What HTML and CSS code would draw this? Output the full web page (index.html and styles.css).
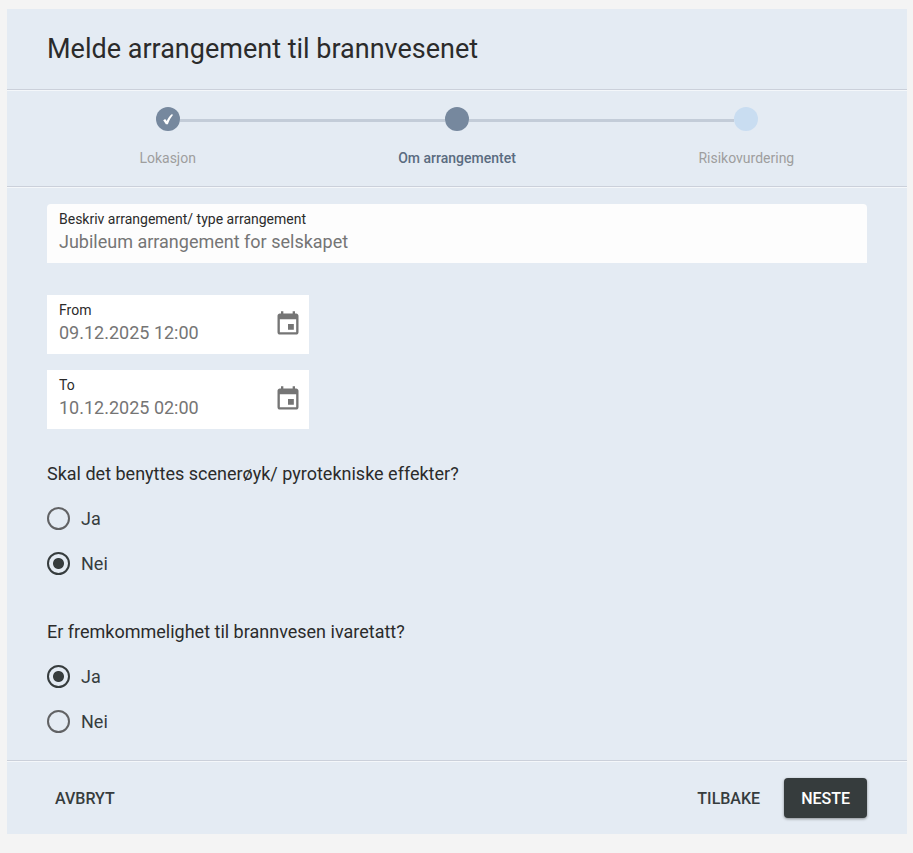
FILE: index.html
```html
<!DOCTYPE html>
<html lang="no">
<head>
    <meta charset="UTF-8">
    <meta name="viewport" content="width=device-width, initial-scale=1.0">
    <title>Melde arrangement til brannvesenet</title>
    <link rel="stylesheet" href="styles.css">
</head>
<body>
    <form class="card">
        <header class="card-header">
            <h1>Melde arrangement til brannvesenet</h1>
        </header>

        <ol class="stepper">
            <li class="step done">
                <div class="track">
                    <span class="dot">
                        <svg width="24" height="24" viewBox="0 0 24 24" aria-hidden="true">
                            <path d="M7.200 13.300l2-1.200 1.500 2c1.100-2.600 2.600-4.900 4.900-6.800l1.500.5c-2.300 2.800-3.900 5.700-5.200 9.400h-2z" fill="#fff"/>
                        </svg>
                    </span>
                </div>
                <span class="step-label">Lokasjon</span>
            </li>
            <li class="step active" aria-current="step">
                <div class="track"><span class="dot"></span></div>
                <span class="step-label">Om arrangementet</span>
            </li>
            <li class="step">
                <div class="track"><span class="dot"></span></div>
                <span class="step-label">Risikovurdering</span>
            </li>
        </ol>

        <main class="content">
            <div class="field field-wide">
                <div class="field-text">
                    <label for="description">Beskriv arrangement/ type arrangement</label>
                    <input type="text" id="description" value="Jubileum arrangement for selskapet">
                </div>
            </div>

            <div class="dates">
                <div class="field">
                    <div class="field-text">
                        <label for="from">From</label>
                        <input type="text" id="from" value="09.12.2025 12:00">
                    </div>
                    <button type="button" class="icon-button" aria-label="From">
                        <svg width="28" height="28" viewBox="0 0 24 24" aria-hidden="true">
                            <path d="M17 12h-5v5h5v-5zM16 1v2H8V1H6v2H5c-1.110 0-1.990.9-1.990 2L3 19c0 1.100.89 2 2 2h14c1.100 0 2-.9 2-2V5c0-1.100-.9-2-2-2h-1V1h-2zm3 18H5V8h14v11z" fill="currentColor"/>
                        </svg>
                    </button>
                </div>
                <div class="field">
                    <div class="field-text">
                        <label for="to">To</label>
                        <input type="text" id="to" value="10.12.2025 02:00">
                    </div>
                    <button type="button" class="icon-button" aria-label="To">
                        <svg width="28" height="28" viewBox="0 0 24 24" aria-hidden="true">
                            <path d="M17 12h-5v5h5v-5zM16 1v2H8V1H6v2H5c-1.110 0-1.990.9-1.990 2L3 19c0 1.100.89 2 2 2h14c1.100 0 2-.9 2-2V5c0-1.100-.9-2-2-2h-1V1h-2zm3 18H5V8h14v11z" fill="currentColor"/>
                        </svg>
                    </button>
                </div>
            </div>

            <fieldset class="question">
                <legend>Skal det benyttes scenerøyk/ pyrotekniske effekter?</legend>
                <label class="option"><input type="radio" name="pyro" value="ja">Ja</label>
                <label class="option"><input type="radio" name="pyro" value="nei" checked>Nei</label>
            </fieldset>

            <fieldset class="question">
                <legend>Er fremkommelighet til brannvesen ivaretatt?</legend>
                <label class="option"><input type="radio" name="access" value="ja" checked>Ja</label>
                <label class="option"><input type="radio" name="access" value="nei">Nei</label>
            </fieldset>
        </main>

        <footer class="actions">
            <button type="button" class="btn">AVBRYT</button>
            <div class="actions-right">
                <button type="button" class="btn">TILBAKE</button>
                <button type="submit" class="btn btn-primary">NESTE</button>
            </div>
        </footer>
    </form>
</body>
</html>
```

FILE: styles.css
```css
* {
    box-sizing: border-box;
}
body {
    margin: 0;
    padding: 9px 6px 16px 7px;
    background-color: #f4f4f4;
    font-family: Roboto, Arial, sans-serif;
    font-size: 18px;
    color: #2b2b2b;
}
button, input {
    font-family: inherit;
}
.card {
    background-color: #e4ebf3;
}

/* Sections are split by a grey line with a light line under it */
.card-header, .stepper, .content {
    border-bottom: 1px solid #cbd0da;
}
.stepper, .content, .actions {
    border-top: 1px solid #f4f7fa;
}

.card-header {
    padding: 20px 40px;
}
h1 {
    margin: 0;
    font-size: 27px;
    font-weight: 400;
    line-height: 40px;
}

/* Stepper */
.stepper {
    display: grid;
    grid-template-columns: repeat(3, 1fr);
    margin: 0;
    padding: 16px 16px 17px;
    list-style: none;
}
.step {
    display: flex;
    flex-direction: column;
    gap: 16px;
    text-align: center;
}
.track {
    display: flex;
    align-items: center;
}
.track::before, .track::after {
    content: "";
    flex: 1;
    height: 3px;
    margin-top: 2px;
    background-color: #c3ccd8;
}
.step:first-child .track::before, .step:last-child .track::after {
    visibility: hidden;
}
.dot {
    width: 24px;
    height: 24px;
    border-radius: 50%;
    background-color: #c9ddf1;
}
.dot svg {
    display: block;
}
.done .dot, .active .dot {
    background-color: #76889e;
}
.step-label {
    font-size: 14px;
    line-height: 22px;
    color: #9e9e9e;
}
.active .step-label {
    font-weight: 500;
    color: #5a6b80;
}

/* Fields */
.content {
    padding: 16px 40px;
}
.field {
    display: flex;
    align-items: center;
    padding: 7px 7px 8px 12px;
    background-color: #fff;
}
.field-wide {
    border-radius: 4px 4px 0 0;
    background-color: #fdfdfd;
}
.field-text {
    flex: 1;
    min-width: 0;
}
.field label {
    display: block;
    font-size: 14px;
    line-height: 16px;
}
.field input {
    display: block;
    width: 100%;
    height: 28px;
    padding: 0;
    border: none;
    outline: none;
    background: none;
    font-size: 18px;
    color: #757575;
}
.dates {
    display: flex;
    flex-direction: column;
    gap: 16px;
    max-width: 262px;
    margin: 32px 0 33px;
}
.icon-button {
    padding: 0;
    border: none;
    background: none;
    color: #757575;
    cursor: pointer;
}
.icon-button svg {
    display: block;
}

/* Radio questions */
.question {
    margin: 0;
    padding: 0;
    border: none;
}
.question + .question {
    margin-top: 34px;
}
.question legend {
    margin-bottom: 10px;
    padding: 0;
    line-height: 24px;
}
.option {
    display: flex;
    align-items: center;
    gap: 11px;
    height: 45px;
    color: #363c3d;
}
.option input {
    appearance: none;
    width: 23px;
    height: 23px;
    margin: 0;
    border: 2px solid #616264;
    border-radius: 50%;
}
.option input:checked {
    border-color: #363c3d;
    background: radial-gradient(circle, #363c3d 5px, transparent 6px);
}

/* Buttons */
.actions {
    display: flex;
    justify-content: space-between;
    padding: 16px 40px;
}
.actions-right {
    display: flex;
    gap: 16px;
}
.btn {
    height: 40px;
    padding: 0 8px;
    border: none;
    border-radius: 4px;
    background: none;
    font-size: 16px;
    font-weight: 500;
    color: #363c3d;
    cursor: pointer;
}
.btn-primary {
    padding: 0 17px;
    background-color: #363c3d;
    box-shadow: 0 1px 3px rgba(0, 0, 0, 0.4);
    color: #fff;
}
```
